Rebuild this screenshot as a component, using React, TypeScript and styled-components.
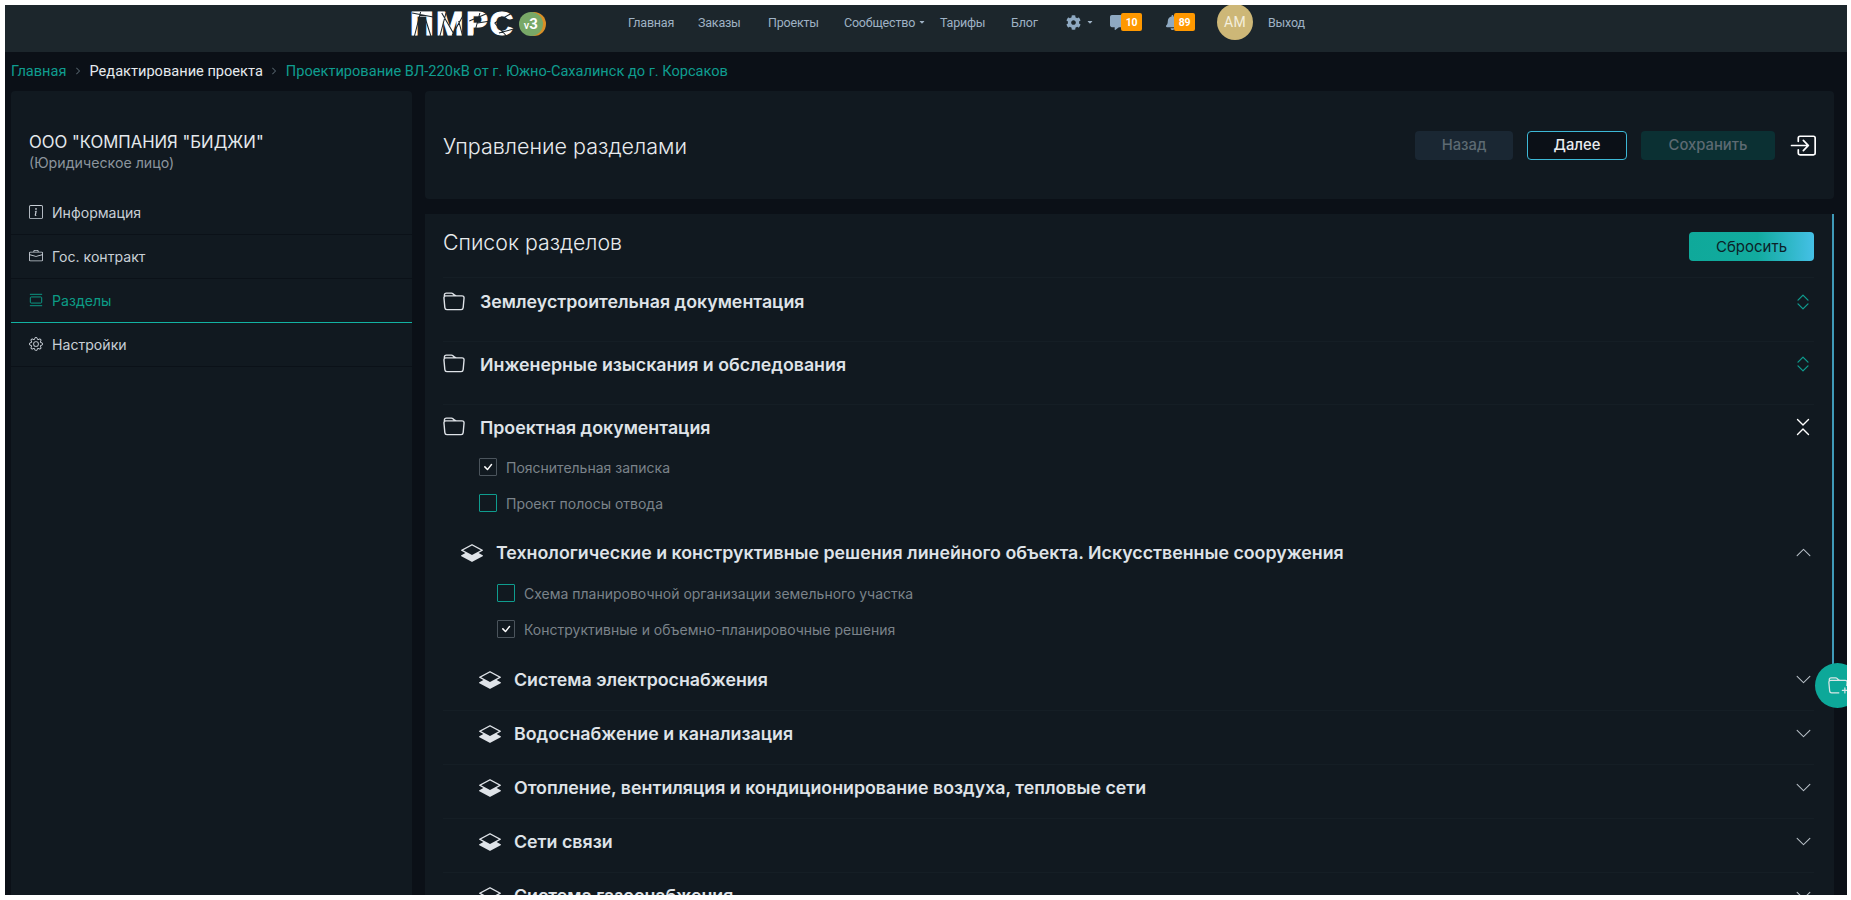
import React from "react";
import styled, { createGlobalStyle } from "styled-components";
import {
  BsBoxArrowInRight,
  BsBriefcase,
  BsCheck,
  BsChevronContract,
  BsChevronDown,
  BsChevronExpand,
  BsChevronRight,
  BsChevronUp,
  BsFolder,
  BsFolderPlus,
  BsGear,
  BsInfoSquare,
  BsLayersHalf,
} from "react-icons/bs";
import { FaBell, FaCaretDown, FaCog, FaCommentAlt } from "react-icons/fa";

const GlobalStyle = createGlobalStyle`
  html, body {
    margin: 0;
    height: 100%;
    overflow: hidden;
    background: #fff;
  }
  body {
    font-family: Inter, "Noto Sans", sans-serif;
  }
`;

const Page = styled.div`
  position: relative;
  box-sizing: border-box;
  margin: 5px 4px 0 5px;
  height: 890px;
  background: #0b1017;
  overflow: hidden;
`;

const TopBar = styled.header`
  height: 47px;
  background: #1c262c;
  display: flex;
  align-items: flex-start;
  font-family: Roboto, sans-serif;
`;

const Logo = styled.div`
  margin-left: 405px;
  width: 140px;
  height: 38px;
  display: flex;
  align-items: center;
  gap: 3px;
`;

const LogoMark = styled.div`
  position: relative;
  font-family: "Liberation Sans", sans-serif;
  font-weight: 700;
  font-size: 33px;
  line-height: 30px;
  color: #fff;
  letter-spacing: 2.4px;
  -webkit-text-stroke: 1px #fff;
`;

const Facets = styled.svg`
  position: absolute;
  inset: 0;
  width: 100%;
  height: 100%;
`;

const Version = styled.div`
  width: 24px;
  height: 24px;
  flex: none;
  border-radius: 50%;
  background: #78a867;
  box-shadow: 3px 0 0 #d98f27;
  color: #fff;
  font-size: 15px;
  font-weight: 700;
  display: flex;
  align-items: baseline;
  justify-content: center;
  line-height: 24px;
  small {
    font-size: 11px;
    font-weight: 500;
  }
`;

const Nav = styled.nav`
  margin-left: 78px;
  height: 34px;
  display: flex;
  align-items: center;
  font-size: 12.5px;
  letter-spacing: -0.2px;
  color: #9fb2c4;
`;

const NavItem = styled.a<{ $width: number }>`
  width: ${(p) => p.$width}px;
  flex: none;
  display: flex;
  align-items: center;
  gap: 3px;
  white-space: nowrap;
`;

const Counter = styled.span<{ $left: number }>`
  position: absolute;
  left: ${(p) => p.$left}px;
  top: 50%;
  margin-top: -9px;
  width: 21px;
  height: 18px;
  border-radius: 2px;
  background: #ff9800;
  color: #fff;
  font-size: 10.5px;
  font-weight: 700;
  display: flex;
  align-items: center;
  justify-content: center;
`;

const Notice = styled.span<{ $width: number }>`
  position: relative;
  width: ${(p) => p.$width}px;
  flex: none;
  display: flex;
  align-items: center;
  font-size: 15px;
  color: #8ea9c2;
`;

const Caret = styled(FaCaretDown)`
  margin-left: 5px;
  font-size: 8px;
  color: #9fb2c4;
`;

const Avatar = styled.div`
  width: 36px;
  height: 36px;
  margin-right: 15px;
  flex: none;
  border-radius: 50%;
  background: #cdb777;
  color: #f4efdd;
  font-size: 14px;
  letter-spacing: 0.3px;
  display: flex;
  align-items: center;
  justify-content: center;
`;

const Crumbs = styled.div`
  height: 39px;
  box-sizing: border-box;
  padding: 0 0 2px 6px;
  display: flex;
  align-items: center;
  gap: 7.5px;
  font-family: Roboto, sans-serif;
  font-size: 14.6px;
  color: #0f9d8f;
  svg {
    font-size: 8px;
    color: #7d8f99;
  }
`;

const CrumbCurrent = styled.span`
  color: #e6eaee;
`;

const Body = styled.div`
  display: grid;
  grid-template-columns: 401px 1409px;
  gap: 13px;
  padding-left: 6px;
`;

const Side = styled.aside`
  background: #111920;
  height: 820px;
  border-radius: 4px 4px 0 0;
`;

const Company = styled.div`
  box-sizing: border-box;
  height: 100px;
  padding: 39px 18px 0;
`;

const CompanyName = styled.div`
  font-size: 16.7px;
  font-weight: 400;
  line-height: 24px;
  color: #e4e8ec;
`;

const CompanyType = styled.div`
  font-size: 14.2px;
  line-height: 18px;
  color: #8b949c;
`;

const SideItem = styled.div<{ $active?: boolean }>`
  box-sizing: border-box;
  height: 44px;
  padding: 0 0 1px 18px;
  display: flex;
  align-items: center;
  gap: 9px;
  font-size: 14.1px;
  color: ${(p) => (p.$active ? "#0c9c86" : "#c8cfd6")};
  border-bottom: 1px solid ${(p) => (p.$active ? "#12b2a2" : "#0b1118")};
  svg {
    font-size: 14px;
  }
`;

const Main = styled.main`
  display: flex;
  flex-direction: column;
  gap: 15px;
`;

const HeadCard = styled.section`
  height: 108px;
  box-sizing: border-box;
  padding: 0 18px 0 18px;
  background: #111920;
  border-radius: 4px;
  display: flex;
  align-items: center;
  justify-content: space-between;
`;

const HeadTitle = styled.h1`
  margin: 2px 0 0;
  font-size: 21.5px;
  font-weight: 300;
  color: #e8ebee;
`;

const HeadActions = styled.div`
  display: flex;
  align-items: center;
  gap: 14px;
`;

const ActionButton = styled.button<{ $kind: "back" | "next" | "save" }>`
  box-sizing: border-box;
  height: 29px;
  width: ${(p) => (p.$kind === "back" ? 98 : p.$kind === "next" ? 100 : 134)}px;
  border-radius: 4px;
  border: ${(p) => (p.$kind === "next" ? "1px solid #3db8d6" : "none")};
  background: ${(p) =>
    p.$kind === "back" ? "#1a2733" : p.$kind === "save" ? "#0b3033" : "#0b1017"};
  color: ${(p) => (p.$kind === "next" ? "#e8ecef" : "#5d6a72")};
  font-family: inherit;
  font-size: 14.8px;
  font-weight: 500;
`;

const ExitIcon = styled.span`
  display: flex;
  color: #fff;
  font-size: 27px;
`;

const ListCard = styled.section`
  position: relative;
  height: 720px;
  box-sizing: border-box;
  padding: 0 20px 0 18px;
  background: #111920;
  overflow: hidden;
`;

const ScrollThumb = styled.div`
  position: absolute;
  right: 0;
  top: 0;
  width: 2px;
  height: 470px;
  background: #3f9ab8;
`;

const ListHead = styled.div`
  box-sizing: border-box;
  height: 64px;
  display: flex;
  align-items: center;
  justify-content: space-between;
  border-bottom: 1px solid #151e25;
`;

const ListTitle = styled.h2`
  margin: 0 0 8px;
  font-size: 21.3px;
  font-weight: 300;
  color: #e8ebee;
`;

const ResetButton = styled.button`
  width: 125px;
  height: 29px;
  margin-top: 2px;
  border: none;
  border-radius: 4px;
  background: linear-gradient(90deg, #0fa99a 0%, #12ab9f 55%, #45c0e6 100%);
  color: #0c2128;
  font-family: inherit;
  font-size: 15px;
`;

const Group = styled.div<{
  $level: number;
  $height: number;
  $top?: number;
  $bottom?: number;
  $line?: boolean;
}>`
  height: ${(p) => p.$height}px;
  box-sizing: border-box;
  padding: ${(p) => p.$top || 0}px 0 ${(p) => p.$bottom || 0}px ${(p) => p.$level}px;
  display: flex;
  align-items: center;
  color: #dfe3e8;
  border-bottom: ${(p) => (p.$line ? "1px solid #151e25" : "none")};
`;

const GroupIcon = styled.span<{ $gap: number }>`
  display: flex;
  width: 22px;
  margin-right: ${(p) => p.$gap}px;
  font-size: 22px;
  flex: none;
`;

const GroupTitle = styled.div`
  flex: 1;
  font-size: 17.8px;
  font-weight: 600;
  white-space: nowrap;
`;

const Toggle = styled.span<{ $tone?: string; $size?: number }>`
  display: flex;
  width: 16px;
  justify-content: center;
  color: ${(p) => p.$tone || "#b9c1c8"};
  font-size: ${(p) => p.$size || 17}px;
  margin-right: 3px;
  svg {
    flex: none;
  }
`;

const CheckRow = styled.label<{ $level: number }>`
  height: 36px;
  padding-left: ${(p) => p.$level}px;
  display: flex;
  align-items: center;
  gap: 9px;
  font-size: 14px;
  color: #7b838a;
`;

const CheckBox = styled.span<{ $checked?: boolean }>`
  box-sizing: border-box;
  width: 18px;
  height: 18px;
  border-radius: 1px;
  border: 1px solid ${(p) => (p.$checked ? "#4b545c" : "#0f9c8e")};
  display: flex;
  align-items: center;
  justify-content: center;
  color: #fff;
  font-size: 18px;
  flex: none;
`;

const SubList = styled.div`
  padding-top: 10px;
`;

const Fab = styled.div`
  position: absolute;
  right: -13px;
  top: 658px;
  width: 45px;
  height: 45px;
  border-radius: 50%;
  background: #0da899;
  color: #d9e6e6;
  font-size: 20px;
  display: flex;
  align-items: center;
  padding-left: 13px;
  box-sizing: border-box;
`;

const SectionsIcon = () => (
  <svg width="14" height="14" viewBox="0 0 16 16" fill="none" stroke="currentColor" strokeWidth="1.1">
    <path d="M1 1.5h14M1 14.5h14" />
    <rect x="1.5" y="4.5" width="13" height="7" rx="1" />
  </svg>
);

const subGroups = [
  "Система электроснабжения",
  "Водоснабжение и канализация",
  "Отопление, вентиляция и кондиционирование воздуха, тепловые сети",
  "Сети связи",
  "Система газоснабжения",
];

function App() {
  return (
    <Page>
      <GlobalStyle />
      <TopBar>
        <Logo>
          <LogoMark>
            ПМРС
            <Facets viewBox="0 0 100 30" preserveAspectRatio="none">
              <path
                d="M2 4L22 8M10 3L4 28M14 8L20 28M28 28L34 4M30 4L42 26M52 3L40 26M46 12L50 28M56 12L74 4M60 28L66 4M64 14L76 12M80 14L98 3M80 14L92 28M84 24L98 20M86 8L96 12"
                stroke="#1c262c"
                strokeWidth="1"
                fill="none"
              />
            </Facets>
          </LogoMark>
          <Version>
            <small>v</small>3
          </Version>
        </Logo>
        <Nav>
          <NavItem $width={70}>Главная</NavItem>
          <NavItem $width={70}>Заказы</NavItem>
          <NavItem $width={76}>Проекты</NavItem>
          <NavItem $width={96}>
            Сообщество <FaCaretDown size={8} />
          </NavItem>
          <NavItem $width={71}>Тарифы</NavItem>
          <NavItem $width={55}>Блог</NavItem>
          <Notice $width={44}>
            <FaCog />
            <Caret />
          </Notice>
          <Notice $width={55}>
            <FaCommentAlt />
            <Counter $left={11}>10</Counter>
          </Notice>
          <Notice $width={52}>
            <FaBell />
            <Counter $left={9}>89</Counter>
          </Notice>
          <Avatar>АМ</Avatar>
          <NavItem $width={50}>Выход</NavItem>
        </Nav>
      </TopBar>
      <Crumbs>
        <span>Главная</span>
        <BsChevronRight />
        <CrumbCurrent>Редактирование проекта</CrumbCurrent>
        <BsChevronRight />
        <span>Проектирование ВЛ-220кВ от г. Южно-Сахалинск до г. Корсаков</span>
      </Crumbs>
      <Body>
        <Side>
          <Company>
            <CompanyName>ООО "КОМПАНИЯ "БИДЖИ"</CompanyName>
            <CompanyType>(Юридическое лицо)</CompanyType>
          </Company>
          <SideItem>
            <BsInfoSquare />
            Информация
          </SideItem>
          <SideItem>
            <BsBriefcase />
            Гос. контракт
          </SideItem>
          <SideItem $active>
            <SectionsIcon />
            Разделы
          </SideItem>
          <SideItem>
            <BsGear />
            Настройки
          </SideItem>
        </Side>
        <Main>
          <HeadCard>
            <HeadTitle>Управление разделами</HeadTitle>
            <HeadActions>
              <ActionButton $kind="back">Назад</ActionButton>
              <ActionButton $kind="next">Далее</ActionButton>
              <ActionButton $kind="save">Сохранить</ActionButton>
              <ExitIcon>
                <BsBoxArrowInRight />
              </ExitIcon>
            </HeadActions>
          </HeadCard>
          <ListCard>
            <ScrollThumb />
            <ListHead>
              <ListTitle>Список разделов</ListTitle>
              <ResetButton>Сбросить</ResetButton>
            </ListHead>
            <Group $level={0} $height={64} $bottom={16} $line>
              <GroupIcon $gap={15}>
                <BsFolder />
              </GroupIcon>
              <GroupTitle>Землеустроительная документация</GroupTitle>
              <Toggle $tone="#0f9c8e" $size={20}>
                <BsChevronExpand />
              </Toggle>
            </Group>
            <Group $level={0} $height={63} $bottom={18} $line>
              <GroupIcon $gap={15}>
                <BsFolder />
              </GroupIcon>
              <GroupTitle>Инженерные изыскания и обследования</GroupTitle>
              <Toggle $tone="#0f9c8e" $size={20}>
                <BsChevronExpand />
              </Toggle>
            </Group>
            <Group $level={0} $height={44}>
              <GroupIcon $gap={15}>
                <BsFolder />
              </GroupIcon>
              <GroupTitle>Проектная документация</GroupTitle>
              <Toggle $tone="#fff" $size={22}>
                <BsChevronContract />
              </Toggle>
            </Group>
            <CheckRow $level={36}>
              <CheckBox $checked>
                <BsCheck />
              </CheckBox>
              Пояснительная записка
            </CheckRow>
            <CheckRow $level={36}>
              <CheckBox />
              Проект полосы отвода
            </CheckRow>
            <Group $level={18} $height={54} $top={9}>
              <GroupIcon $gap={13}>
                <BsLayersHalf />
              </GroupIcon>
              <GroupTitle>
                Технологические и конструктивные решения линейного объекта.
                Искусственные сооружения
              </GroupTitle>
              <Toggle>
                <BsChevronUp />
              </Toggle>
            </Group>
            <CheckRow $level={54}>
              <CheckBox />
              Схема планировочной организации земельного участка
            </CheckRow>
            <CheckRow $level={54}>
              <CheckBox $checked>
                <BsCheck />
              </CheckBox>
              Конструктивные и объемно-планировочные решения
            </CheckRow>
            <SubList>
              {subGroups.map((title) => (
                <Group key={title} $level={36} $height={54} $bottom={8} $line>
                  <GroupIcon $gap={13}>
                    <BsLayersHalf />
                  </GroupIcon>
                  <GroupTitle>{title}</GroupTitle>
                  <Toggle>
                    <BsChevronDown />
                  </Toggle>
                </Group>
              ))}
            </SubList>
          </ListCard>
        </Main>
      </Body>
      <Fab>
        <BsFolderPlus />
      </Fab>
    </Page>
  );
}

export default App;
